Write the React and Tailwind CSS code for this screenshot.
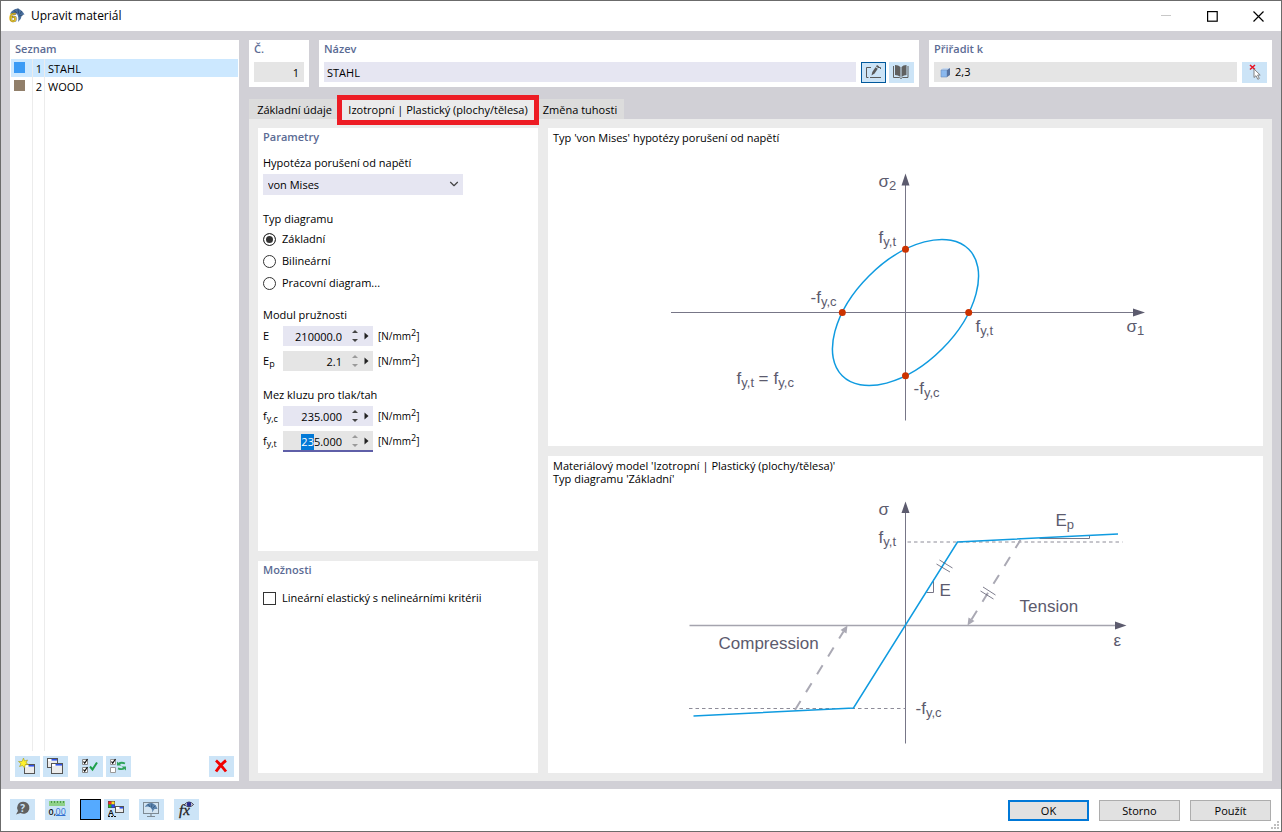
import React, { useEffect, useRef, useState } from 'react';
import { ChevronDown } from 'lucide-react';

const MATERIALS = [
  { no: 1, name: 'STAHL', swatch: 'bg-[#3b9bf5]' },
  { no: 2, name: 'WOOD', swatch: 'bg-[#917f6a]' },
];

const TABS = [
  { label: 'Základní údaje', width: 'w-[91px]' },
  { label: 'Izotropní | Plastický (plochy/tělesa)', width: 'w-[196px]' },
  { label: 'Změna tuhosti', width: 'w-[88px]' },
];

const DIAGRAM_TYPES = ['Základní', 'Bilineární', 'Pracovní diagram...'];

const App = () => {
  const [selected, setSelected] = useState(1);
  const [tab, setTab] = useState(1);

  return (
    <div className="flex min-h-screen flex-col border border-[#6b6b6b] bg-white font-['Open_Sans','Noto_Sans',sans-serif] text-[11px] leading-4 text-black">
      <TitleBar />

      <main className="flex flex-1 gap-2.5 bg-[#d1d0d6] pt-[9px] pr-[9px] pb-2 pl-[9px]">
        <MaterialList selected={selected} onSelect={setSelected} />

        <div className="flex min-w-0 flex-1 flex-col">
          <div className="grid grid-cols-[60px_600fr_343fr] gap-2.5">
            <Panel title="Č." htmlFor="number">
              <input
                id="number"
                readOnly
                value="1"
                className="mx-[5px] mt-1 mb-[5px] h-5 bg-[#e5e5e5] px-[5px] text-right outline-none"
              />
            </Panel>
            <Panel title="Název" htmlFor="name">
              <div className="mt-1 mb-1 flex gap-[3px] px-[5px]">
                <input
                  id="name"
                  defaultValue="STAHL"
                  className="mr-0.5 h-5 min-w-0 flex-1 bg-[#e6e6f2] px-[3px] outline-none"
                />
                <IconButton label="Upravit název" className="border border-[#00589c]">
                  <EditIcon />
                </IconButton>
                <IconButton label="Knihovna materiálů">
                  <BookIcon />
                </IconButton>
              </div>
            </Panel>
            <Panel title="Přiřadit k" htmlFor="assign">
              <div className="mt-1 mb-1 flex gap-[5px] px-[5px]">
                <div className="flex h-5 min-w-0 flex-1 items-center gap-1 bg-[#e5e5e5] pl-1.5">
                  <CubeIcon />
                  <input id="assign" readOnly value="2,3" className="min-w-0 flex-1 outline-none" />
                </div>
                <IconButton label="Vybrat objekty">
                  <PickIcon />
                </IconButton>
              </div>
            </Panel>
          </div>

          <div role="tablist" className="mt-3 flex">
            {TABS.map((item, i) => (
              <button
                key={item.label}
                role="tab"
                aria-selected={tab === i}
                onClick={() => setTab(i)}
                className={`relative h-5 whitespace-nowrap pt-0.5 ${item.width} ${tab === i ? 'bg-[#ebebeb]' : 'bg-[#dcdcdc]'}`}
              >
                {item.label}
                {tab === i && (
                  <span className="pointer-events-none absolute -inset-x-[3px] -top-1 -bottom-1.5 z-10 border-5 border-[#ed1c24]" />
                )}
              </button>
            ))}
          </div>

          <div className="flex flex-1 gap-2.5 bg-[#ebebeb] px-[9px] pt-[9px] pb-2">
            <div className="grid w-[280px] shrink-0 grid-rows-[423fr_212fr] gap-2.5">
              <Parameters />
              <Panel title="Možnosti">
                <label className="mt-[11px] flex items-center gap-1.5 px-[5px]">
                  <input
                    type="checkbox"
                    className="size-[13px] appearance-none border border-[#333333] bg-white checked:bg-[#333333]"
                  />
                  Lineární elastický s nelineárními kritérii
                </label>
              </Panel>
            </div>

            <div className="grid min-w-0 flex-1 grid-rows-[318fr_317fr] gap-2.5">
              <section className="bg-white px-[5px] pt-[3px]">
                <p className="leading-[13px]">Typ 'von Mises' hypotézy porušení od napětí</p>
                <YieldDiagram />
              </section>
              <section className="bg-white px-[5px] pt-[3px]">
                <p className="leading-[13px]">Materiálový model 'Izotropní | Plastický (plochy/tělesa)'</p>
                <p className="leading-[13px]">Typ diagramu 'Základní'</p>
                <StressStrainDiagram />
              </section>
            </div>
          </div>
        </div>
      </main>

      <Footer />
    </div>
  );
};

const TitleBar = () => (
  <header className="flex h-[30px] items-center">
    <div className="flex flex-1 items-center gap-1.5 pl-[7px]">
      <AppIcon />
      <h1 className="text-[12px]">Upravit materiál</h1>
    </div>
    <button aria-label="Minimalizovat" className="flex h-full w-[46px] items-center justify-center">
      <svg width="11" height="11" stroke="#c8c8c8">
        <path d="M0 4.5H10" />
      </svg>
    </button>
    <button aria-label="Maximalizovat" className="flex h-full w-[46px] items-center justify-center">
      <svg width="11" height="11" fill="none" stroke="#000" strokeWidth="1.2">
        <rect x="0.6" y="0.6" width="9.6" height="9.6" />
      </svg>
    </button>
    <button aria-label="Zavřít" className="flex h-full w-[46px] items-center justify-center">
      <svg width="11" height="11" stroke="#000" strokeWidth="1.2">
        <path d="M0.5 0.5L10.5 10.5M10.5 0.5L0.5 10.5" />
      </svg>
    </button>
  </header>
);

const Panel = ({ title, htmlFor, children }) => {
  const Title = htmlFor ? 'label' : 'h2';
  return (
    <section className="flex min-w-0 flex-col bg-white">
      <Title htmlFor={htmlFor} className="block px-[5px] leading-[18px] font-semibold text-[#5b6b94]">
        {title}
      </Title>
      {children}
    </section>
  );
};

const MaterialList = ({ selected, onSelect }) => (
  <aside className="flex w-[229px] shrink-0 flex-col bg-white">
    <h2 className="px-[5px] leading-[18px] font-semibold text-[#5b6b94]">Seznam</h2>
    <div className="mt-px flex flex-1 flex-col px-px">
      <table className="w-full table-fixed border-separate border-spacing-0">
        <tbody>
          {MATERIALS.map((m) => (
            <tr
              key={m.no}
              onClick={() => onSelect(m.no)}
              className={`h-[18px] ${selected === m.no ? 'bg-[#cce8ff]' : ''}`}
            >
              <td className="w-[22px] border-r border-[#ececec] p-0 pb-px pl-[3px]">
                <div className={`size-[11px] ${m.swatch}`} />
              </td>
              <td className="w-3 border-r border-[#ececec] p-0 pt-0.5 pr-0.5 text-right">{m.no}</td>
              <td className="p-0 pt-0.5 pl-[3px]">{m.name}</td>
            </tr>
          ))}
        </tbody>
      </table>
      <div className="flex flex-1">
        <div className="w-[22px] border-r border-[#ececec]" />
        <div className="w-3 border-r border-[#ececec]" />
      </div>
    </div>
    <div className="mt-[5px] flex gap-[3px] px-[5px] pb-1">
      <IconButton label="Nový materiál">
        <NewIcon />
      </IconButton>
      <IconButton label="Kopírovat materiál">
        <CopyIcon />
      </IconButton>
      <IconButton label="Vybrat vše" className="ml-[7px]">
        <CheckAllIcon />
      </IconButton>
      <IconButton label="Obrátit výběr">
        <InvertIcon />
      </IconButton>
      <IconButton label="Smazat" className="ml-auto">
        <svg viewBox="0 0 25 21" stroke="#f00000" strokeWidth="2.8" fill="none">
          <path d="M7 4.5Q11.5 8.5 17 15.5M17 4.5Q11.5 8.5 7 15.5" />
        </svg>
      </IconButton>
    </div>
  </aside>
);

const Parameters = () => {
  const [type, setType] = useState(0);
  const fyt = useRef(null);

  useEffect(() => {
    fyt.current.focus();
    fyt.current.setSelectionRange(0, 2);
  }, []);

  return (
    <Panel title="Parametry">
      <div className="px-[5px]">
        <label htmlFor="hypothesis" className="mt-[9px] block">
          Hypotéza porušení od napětí
        </label>
        <div className="relative mt-[3px] w-[200px]">
          <select id="hypothesis" className="block h-[21px] w-full appearance-none bg-[#e6e6f2] pl-[5px] outline-none">
            <option>von Mises</option>
          </select>
          <ChevronDown
            size={14}
            strokeWidth={2}
            className="pointer-events-none absolute top-[3px] right-0.5 text-[#444444]"
          />
        </div>

        <fieldset className="mt-4">
          <legend className="mb-px">Typ diagramu</legend>
          {DIAGRAM_TYPES.map((label, i) => (
            <label key={label} className="flex h-[22px] items-center gap-1.5">
              <input
                type="radio"
                name="diagram"
                checked={type === i}
                onChange={() => setType(i)}
                className="size-[13px] appearance-none rounded-full border border-[#333333] bg-white checked:bg-[#333333] checked:shadow-[inset_0_0_0_2px_white]"
              />
              {label}
            </label>
          ))}
        </fieldset>

        <h3 className="mt-[13px] mb-[3px]">Modul pružnosti</h3>
        <div className="flex flex-col gap-[5px]">
          <SpinField id="e" base="E" value="210000.0" />
          <SpinField id="ep" base="E" sub="p" value="2.1" muted />
        </div>

        <h3 className="mt-4 mb-[3px]">Mez kluzu pro tlak/tah</h3>
        <div className="flex flex-col gap-[5px]">
          <SpinField id="fyc" base="f" sub="y,c" value="235.000" />
          <SpinField id="fyt" base="f" sub="y,t" value="235.000" muted underlined inputRef={fyt} />
        </div>
      </div>
    </Panel>
  );
};

const SpinField = ({ id, base, sub, value, muted, underlined, inputRef }) => (
  <div className="flex h-5 items-center">
    <label htmlFor={id} className="w-5 whitespace-nowrap">
      {base}
      {sub && <sub className="text-[9px]">{sub}</sub>}
    </label>
    <div
      className={`flex h-5 w-[90px] items-center ${muted ? 'bg-[#e5e5e5]' : 'bg-[#e6e6f2]'} ${underlined ? 'shadow-[0_1px_0_#5f5fa8,inset_0_-1px_0_#5f5fa8]' : ''}`}
    >
      <input
        id={id}
        ref={inputRef}
        defaultValue={value}
        className="w-[60px] pt-px pr-px text-right caret-transparent outline-none selection:bg-[#0078d7]/99 selection:text-white"
      />
      <div className={`ml-1.5 flex flex-col gap-[5px] ${muted ? 'text-[#9a9a9a]' : 'text-[#444444]'}`}>
        <button aria-label="Zvýšit" className="flex h-1 w-[11px] justify-center">
          <svg width="6" height="3" fill="currentColor">
            <path d="M0 3L3 0L6 3Z" />
          </svg>
        </button>
        <button aria-label="Snížit" className="flex h-1 w-[11px] justify-center">
          <svg width="6" height="3" fill="currentColor">
            <path d="M0 0L3 3L6 0Z" />
          </svg>
        </button>
      </div>
      <button aria-label="Možnosti hodnoty" className="flex flex-1 justify-center">
        <svg width="5" height="8" fill="#222">
          <path d="M0.5 0.5L4.5 4L0.5 7.5Z" />
        </svg>
      </button>
    </div>
    <span className="ml-[5px] text-[10px]">
      [N/mm<sup className="text-[9px]">2</sup>]
    </span>
  </div>
);

// Label with an optional subscript, x/y is the baseline start
const Tag = ({ x, y, base, sub }) => (
  <text x={x} y={y}>
    {base}
    {sub && (
      <tspan dy="3" fontSize="13">
        {sub}
      </tspan>
    )}
  </text>
);

const YieldDiagram = () => (
  <svg
    viewBox="-249.5 -159.5 499 277"
    className="mx-auto mt-[9px] block w-[499px] max-w-full font-['Liberation_Sans',sans-serif] text-[17px]"
    fill="#5c5b6e"
  >
    <path d="M-234.5 0H230M0 108V-130" stroke="#777687" strokeWidth="1" />
    <path d="M239.5 0L227.5 -4V4ZM0 -139L-4 -127H4Z" />
    <ellipse rx="89.5" ry="51.7" transform="rotate(-45)" fill="none" stroke="#0f9be0" strokeWidth="1.5" />
    <g fill="#cc3300">
      <circle cx="63.2" r="3.5" />
      <circle cx="-63.2" r="3.5" />
      <circle cy="63.2" r="3.5" />
      <circle cy="-63.2" r="3.5" />
    </g>
    <Tag x={-27} y={-126} base="σ" sub="2" />
    <Tag x={221} y={19} base="σ" sub="1" />
    <Tag x={-27} y={-70} base="f" sub="y,t" />
    <Tag x={70} y={19} base="f" sub="y,t" />
    <Tag x={-95} y={-10} base="-f" sub="y,c" />
    <Tag x={8} y={81} base="-f" sub="y,c" />
    <Tag x={-169} y={71} base="f" sub="y,t" />
    <Tag x={-147} y={71} base="=" />
    <Tag x={-132} y={71} base="f" sub="y,c" />
  </svg>
);

const StressStrainDiagram = () => (
  <svg
    viewBox="-225.5 -131.5 451 256"
    className="mx-auto mt-[9px] block w-[451px] max-w-full font-['Liberation_Sans',sans-serif] text-[17px]"
    fill="#5c5b6e"
  >
    <g fill="none">
      <path d="M-216 0H212" stroke="#a5a4ae" strokeWidth="1.4" />
      <path d="M0 118V-115" stroke="#777687" />
      <path d="M2 -83.5H217M-216.5 83H0" stroke="#8d8c98" strokeDasharray="3.5 3" />
      <path d="M115 -85.5L66 -6" stroke="#aaa9b4" strokeWidth="2" strokeDasharray="10.5 10.5" strokeDashoffset="1" />
      <path d="M-110.5 84.5L-62 6" stroke="#aaa9b4" strokeWidth="2" strokeDasharray="10.5 10.5" />
      <path d="M134 -87H184V-90M28 -46V-33H21" stroke="#777687" />
      <path d="M-212 90.5L-52 82.5L52 -83.5L212.5 -91.5" stroke="#0f9be0" strokeWidth="1.5" />
      <path
        d="M31 -61.5L44.5 -53.5M34 -65.5L47 -57.5M75 -34.5L88 -26.5M77.5 -38.5L90 -30.5"
        stroke="#5c5b6e"
        strokeWidth="0.8"
      />
    </g>
    <path d="M62 0L63 -8L69 -4.5ZM-58 0L-65 4.5L-59 8Z" fill="#aaa9b4" />
    <path d="M221 0L209.5 -4V4ZM0 -124L-4 -112.5H4Z" />
    <Tag x={-27} y={-111} base="σ" />
    <Tag x={-27} y={-83} base="f" sub="y,t" />
    <Tag x={150} y={-100} base="E" sub="p" />
    <Tag x={34} y={-30} base="E" />
    <Tag x={114} y={-14} base="Tension" />
    <Tag x={-187} y={23} base="Compression" />
    <Tag x={208} y={20} base="ε" />
    <Tag x={10} y={88} base="-f" sub="y,c" />
  </svg>
);

const Footer = () => (
  <footer className="flex items-start pt-2.5 pl-[9px]">
    <div className="flex flex-1 gap-2.5 pb-[11px]">
      <IconButton label="Nápověda">
        <HelpIcon />
      </IconButton>
      <IconButton label="Jednotky a desetinná místa">
        <UnitsIcon />
      </IconButton>
      <div className="flex gap-[3px]">
        <button aria-label="Barva" className="size-[21px] border border-black bg-[#55aaff]" />
        <IconButton label="Možnosti zobrazení">
          <DisplayIcon />
        </IconButton>
      </div>
      <IconButton label="Grafika">
        <MonitorIcon />
      </IconButton>
      <IconButton label="Vzorce">
        <FormulaIcon />
      </IconButton>
    </div>
    <div className="mt-px flex gap-2.5">
      <button className="h-[21px] w-[81px] border-2 border-[#0078d7] bg-[#e1e1e1]">OK</button>
      <button className="h-[21px] w-[81px] border border-[#adadad] bg-[#e1e1e1]">Storno</button>
      <button className="h-[21px] w-[81px] border border-[#adadad] bg-[#e1e1e1]">Použít</button>
    </div>
    <svg width="10" height="10" fill="#bfbfbf" className="self-end">
      <path d="M6 0h2v2h-2zM3 3h2v2h-2zM6 3h2v2h-2zM0 6h2v2h-2zM3 6h2v2h-2zM6 6h2v2h-2z" />
    </svg>
  </footer>
);

const IconButton = ({ label, className = '', children }) => (
  <button aria-label={label} title={label} className={`h-[21px] w-[25px] shrink-0 bg-[#cce4f7] ${className}`}>
    {children}
  </button>
);

const AppIcon = () => (
  <svg width="17" height="18" viewBox="0 0 17 18">
    <path d="M2 7Q4 2 10 1.5Q14 3 16.5 7.5L14 8Q13.5 12 10 15Q11 10 9 7Q6 5 2 7Z" fill="#4a6f9f" />
    <path d="M6 3.5L9 6M10 1.5L10.5 6.5M14 4L11.5 7.5M15 8L11 9" stroke="#24405f" strokeWidth="0.7" />
    <text x="1.5" y="15" fontSize="13" fontWeight="700" fill="#f7d22c" stroke="#6b5a10" strokeWidth="0.5">
      6
    </text>
  </svg>
);

const CubeIcon = () => (
  <svg width="11" height="11" viewBox="0 0 11 11">
    <path d="M1 3L3 1H10L7.5 3Z" fill="#c5d8ef" />
    <path d="M1 3H7V10H1Z" fill="#8ab8ee" stroke="#6d8fbd" strokeWidth="0.6" />
    <path d="M7 3L10 1V8L7 10Z" fill="#5672a0" />
  </svg>
);

const EditIcon = () => (
  <svg viewBox="1 1 23 19" fill="none" stroke="#5a5a5a">
    <path d="M10 5.5H5.5V15.5H7.5M9 15.5H20M17 5.5H19.5V7" />
    <path d="M10.5 13.5L11.3 10L14.5 5.2L16.8 6.8L13.5 11.6Z" fill="#5a5a5a" stroke="none" />
    <path d="M15 4.5L16 3L18.2 4.6L17.3 6.1Z" fill="#5a5a5a" stroke="none" />
  </svg>
);

const BookIcon = () => (
  <svg viewBox="0 0 25 21">
    <path d="M6 3Q9.5 3 11.5 5V15Q9 13 6 13ZM17.5 3Q14 3 12.5 5V15Q15 13 17.5 13Z" fill="#606060" />
    <path d="M4.5 4V15.5H10.5L12 16.5L13.5 15.5H19V4" fill="none" stroke="#606060" />
  </svg>
);

const PickIcon = () => (
  <svg viewBox="0 0 25 21">
    <path d="M8 3L13 7.5M13 3L8 7.5" stroke="#e81123" strokeWidth="1.5" />
    <path d="M12 7V15.5L14 13.7L15.8 17.3L17.3 16.5L15.6 13H18.2Z" fill="#fff" stroke="#777" strokeWidth="0.9" />
  </svg>
);

// Small window used by several toolbar icons
const MiniWindow = ({ x, y, w = 10, h = 9 }) => (
  <g>
    <rect x={x} y={y} width={w} height={h} fill="#ececec" stroke="#555" strokeWidth="1" />
    <path d={`M${x + 0.5} ${y + 1.5}h${w - 1}`} stroke="#fff" strokeWidth="2" />
    <path d={`M${x + 4} ${y + 1.3}h${w - 4.5}`} stroke="#2f52e8" strokeWidth="1.6" />
  </g>
);

const NewIcon = () => (
  <svg viewBox="0 0 25 21">
    <MiniWindow x={9.5} y={8.5} />
    <path
      d="M8.5 2L9.5 5L12.5 4L11 7L13.5 8.5L10.2 8.8L9.5 12L7.5 9.5L4.5 10.5L6 7.7L3.5 5.5L7 5.5Z"
      fill="#fff12e"
      stroke="#a39a1d"
      strokeWidth="0.6"
    />
  </svg>
);

const CopyIcon = () => (
  <svg viewBox="0 0 25 21">
    <MiniWindow x={4.5} y={2.5} />
    <MiniWindow x={8.5} y={7.5} w={11} h={10} />
  </svg>
);

const CheckAllIcon = () => (
  <svg viewBox="0 0 25 21" fill="none">
    <path d="M4.5 3.5H9.5V8.5H4.5ZM4.5 11.5H9.5V16.5H4.5Z" fill="#fff" stroke="#888" />
    <path d="M5.5 5.5L6.7 7.2L9.5 3M5.5 13.5L6.7 15.2L9.5 11" stroke="#111" strokeWidth="1.2" />
    <path d="M12 10.5L14.5 13.5L19 6.5" stroke="#1fa04b" strokeWidth="2" />
  </svg>
);

const InvertIcon = () => (
  <svg viewBox="0 0 25 21" fill="none">
    <path d="M4.5 3.5H9.5V8.5H4.5ZM4.5 11.5H9.5V16.5H4.5Z" fill="#fff" stroke="#999" />
    <path d="M5.5 5.5L6.7 7.2L9.5 3" stroke="#111" strokeWidth="1.2" />
    <path d="M12.5 8Q15 5.8 19 7.5M18.5 12Q16 14 12 12.3" stroke="#2fa35a" strokeWidth="1.8" />
    <path d="M11 5.5V9.5H15.5ZM20 14.5V10.5H15.5Z" fill="#2fa35a" />
  </svg>
);

const HelpIcon = () => (
  <svg viewBox="0 0 25 21">
    <path d="M13 2.8A6 6 0 1 1 10.5 14L6 15.5L8 12A6 6 0 0 1 13 2.8Z" fill="#606060" />
    <text x="10.3" y="12.5" fontSize="10" fontWeight="700" fill="#cce4f7">
      ?
    </text>
  </svg>
);

const UnitsIcon = () => (
  <svg viewBox="0 0 25 21">
    <rect x="4" y="2" width="16" height="5" fill="#8fd189" />
    <path d="M6.5 2V4M9.5 2V4M12.5 2V4M15.5 2V4M18.5 2V4" stroke="#3c8b3a" strokeWidth="0.8" />
    <text x="3.5" y="15.5" fontSize="9" fontWeight="600" fill="#111">
      0,
    </text>
    <text x="10.5" y="15.5" fontSize="9" fill="#2f6fd0">
      00
    </text>
    <path d="M11 16.5H20.5" stroke="#2f6fd0" />
  </svg>
);

const DisplayIcon = () => (
  <svg viewBox="0 0 25 21">
    <rect x="4" y="2" width="7" height="7" fill="#444" />
    <rect x="4.5" y="2.5" width="3" height="3" fill="#f22" />
    <rect x="7.5" y="2.5" width="3" height="3" fill="#fd2" />
    <rect x="4.5" y="5.5" width="3" height="3" fill="#2b2" />
    <rect x="7.5" y="5.5" width="3" height="3" fill="#24f" />
    <text x="4" y="16.5" fontSize="9" fontWeight="600" fill="#111">
      A
    </text>
    <path d="M4 17.5H12" stroke="#111" strokeDasharray="2 1" />
    <MiniWindow x={11.5} y={7.5} w={8} h={6} />
  </svg>
);

const MonitorIcon = () => (
  <svg viewBox="0 0 25 21">
    <rect x="4.5" y="3.5" width="15" height="11" fill="#d3e4f1" stroke="#7d8a94" />
    <path d="M12 14V17M8 17.5H16" stroke="#7d8a94" strokeWidth="1.2" />
    <path d="M5.8 8Q8 3.8 12.5 4Q17 5 18.5 10L15.5 10L13 13.5Q13.5 10 11.5 8.5Q9 7 5.8 8Z" fill="#5b83ad" />
    <path d="M9 5L11 8M13 4.5L12.5 8.5M16.5 6.5L13.5 9.5" stroke="#2f5579" strokeWidth="0.7" />
  </svg>
);

const FormulaIcon = () => (
  <svg viewBox="0 0 25 21">
    <text
      x="5"
      y="15.5"
      fontSize="15"
      fontStyle="italic"
      fill="#222"
      stroke="#222"
      strokeWidth="0.3"
      className="font-['Liberation_Serif',serif]"
    >
      fx
    </text>
    <path d="M10.5 5.5Q15 0.5 19.5 5.5Q15 10 10.5 5.5Z" fill="#fff" stroke="#223" strokeWidth="0.9" />
    <circle cx="15" cy="5.3" r="2.3" fill="#2a2d8f" />
  </svg>
);

export default App;
